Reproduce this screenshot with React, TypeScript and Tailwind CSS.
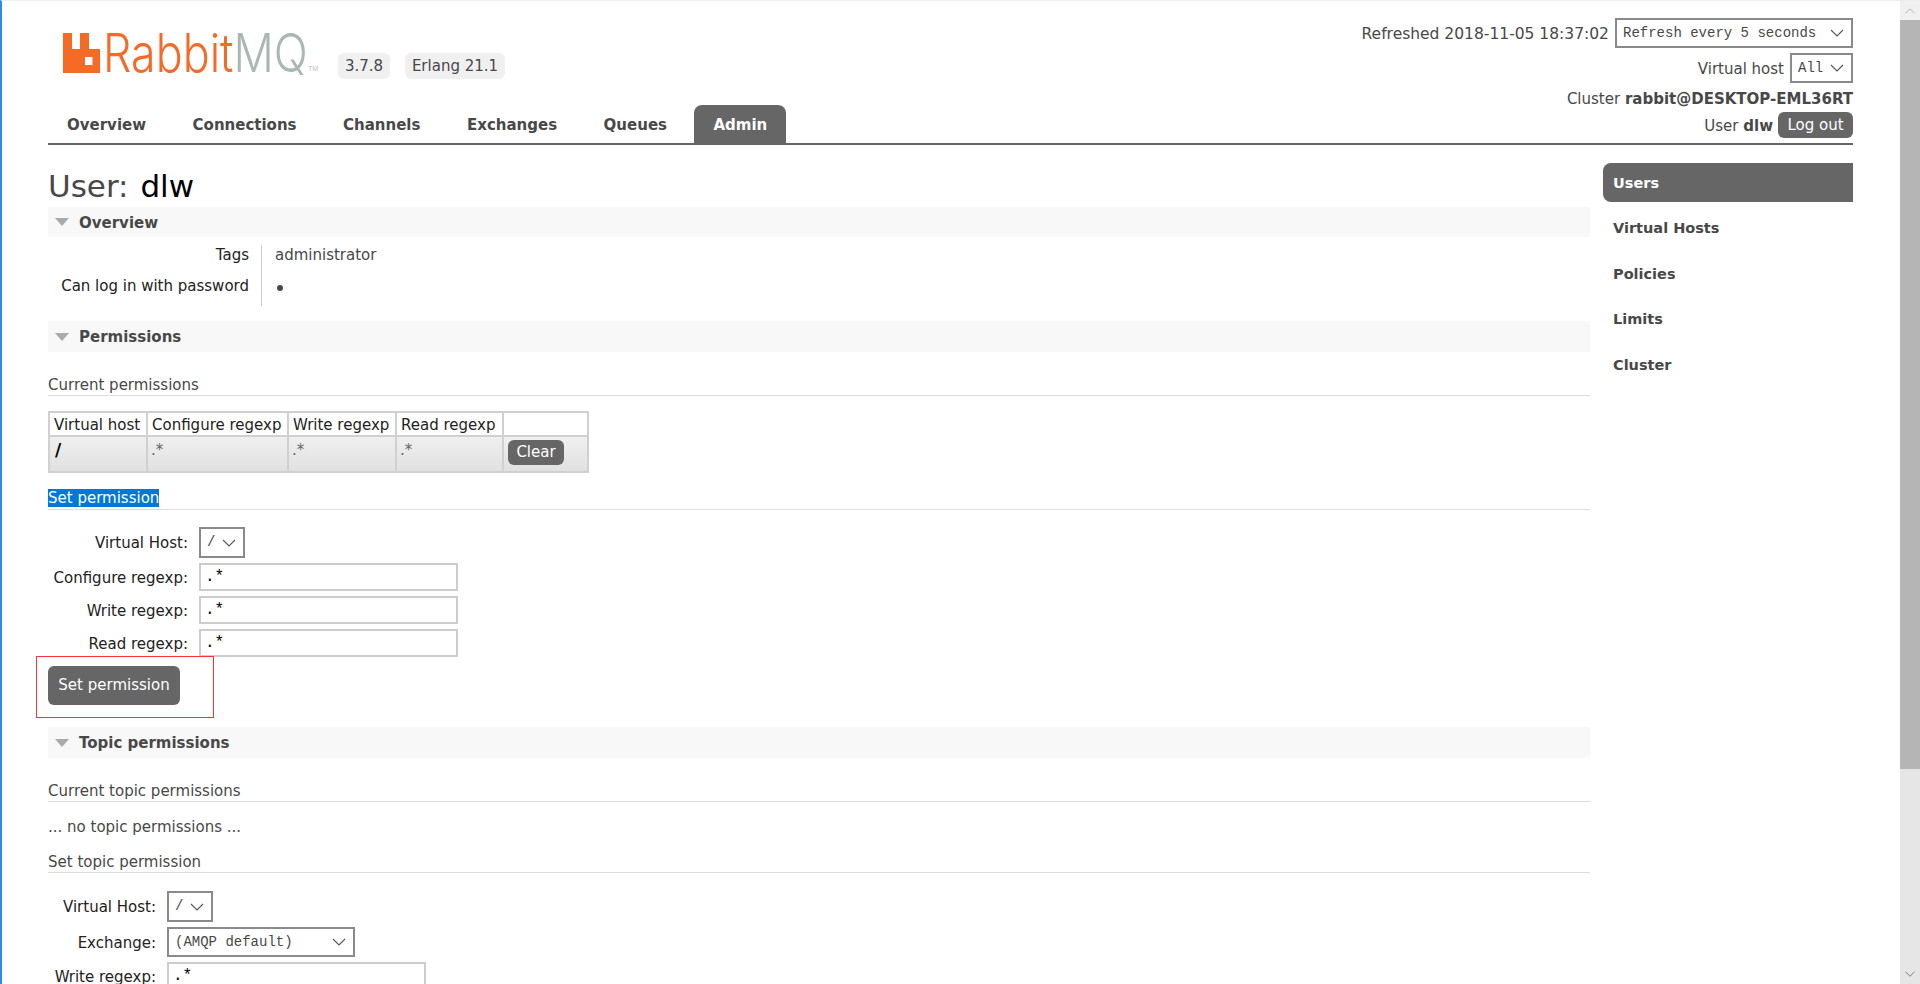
function Chevron({ className = "stroke-[#555]" }: { className?: string }) {
  return (
    <svg viewBox="0 0 14 8" className={`h-2 w-3.5 shrink-0 fill-none ${className}`}>
      <path d="M1 1l6 6 6-6" strokeWidth="1.1" />
    </svg>
  );
}

function FakeSelect({ value, className }: { value: string; className: string }) {
  return (
    <div
      className={`flex items-center justify-between border-2 border-[#8a8a8a] bg-white pl-[6px] pr-[7px] font-['Liberation_Mono',monospace] text-[14px] text-[#484848] ${className}`}
    >
      <span className="whitespace-nowrap">{value}</span>
      <Chevron />
    </div>
  );
}

function RegexpInput({ className }: { className: string }) {
  return (
    <input
      readOnly
      value=".*"
      className={`h-[28px] border-2 border-[#ccc] bg-white pl-[4px] font-['Liberation_Mono',monospace] text-[16px] text-black outline-none ${className}`}
    />
  );
}

function SectionHeader({ title, className = "" }: { title: string; className?: string }) {
  return (
    <div className={`flex h-[31px] items-center bg-[#f8f8f8] pl-[7px] ${className}`}>
      <div className="h-0 w-0 border-x-[7px] border-t-[8px] border-x-transparent border-t-[#aaa]" />
      <h2 className="ml-[10px] pt-[2px] text-[15px] font-bold text-[#484848]">{title}</h2>
    </div>
  );
}

function SubHeader({ children, className = "" }: { children: React.ReactNode; className?: string }) {
  return (
    <div className={`h-[20px] border-b border-[#ddd] text-[15px] leading-[18px] text-[#484848] ${className}`}>
      {children}
    </div>
  );
}

function FormRow({
  label,
  labelWidth,
  className = "",
  children,
}: {
  label: string;
  labelWidth: string;
  className?: string;
  children: React.ReactNode;
}) {
  return (
    <div className={`flex items-center gap-[11px] ${className}`}>
      <label className={`pt-[2px] text-right text-[15px] text-[#222] ${labelWidth}`}>{label}</label>
      {children}
    </div>
  );
}

function Logo() {
  return (
    <div className="ml-[15px] flex w-[275px] items-start">
      <svg viewBox="0 0 37 40" className="h-[40px] w-[37px] shrink-0">
        <path
          fillRule="evenodd"
          fill="#f56a25"
          d="M0 0H9V16H17V0H26V16H37V40H0ZM22 24V32H29.5V24Z"
        />
      </svg>
      <div className="relative ml-[3px] h-[40px] w-[235px]">
        <span className="absolute -top-[16px] left-0 origin-left scale-x-[0.845] whitespace-nowrap font-['Inter',sans-serif] text-[53px] font-light leading-[72px] text-[#f56a25]">
          Rabbit<span className="text-[#a9b8b2]">MQ</span>
        </span>
        <span className="absolute left-[205px] top-[31px] font-['Liberation_Sans',sans-serif] text-[7px] text-[#b5bfbb]">TM</span>
      </div>
    </div>
  );
}

const tabs = ["Overview", "Connections", "Channels", "Exchanges", "Queues"];
const sideItems = ["Virtual Hosts", "Policies", "Limits", "Cluster"];

export default function App() {
  return (
    <div className="flex h-[984px] w-full overflow-hidden border-l-2 border-t border-l-[#2f89e8] border-t-[#eee] bg-white font-['DejaVu_Sans',sans-serif] text-[#484848]">
      <div className="min-w-0 flex-1 pl-[46px] pr-[47px]">
        <header className="flex h-[144px] justify-between border-b-2 border-[#666]">
          <div className="flex flex-col pt-[32px]">
            <div className="flex items-start">
              <Logo />
              <div className="mt-[20px] flex gap-[15px] text-[15px]">
                <span className="flex h-[26px] w-[52px] items-center justify-center rounded-md bg-[#f0f0f0]">3.7.8</span>
                <span className="flex h-[26px] w-[100px] items-center justify-center rounded-md bg-[#f0f0f0]">Erlang 21.1</span>
              </div>
            </div>
            <nav className="mt-auto flex gap-[8.5px]">
              {tabs.map((tab) => (
                <a key={tab} className="flex h-[38px] items-center px-[19px] pt-[2px] text-[15px] font-bold text-[#484848]">
                  {tab}
                </a>
              ))}
              <a className="flex h-[38px] items-center rounded-t-lg bg-[#666] px-[19px] pt-[2px] text-[15px] font-bold text-white">
                Admin
              </a>
            </nav>
          </div>
          <div className="flex flex-col items-end pt-[17px] text-[15px]">
            <div className="flex h-[30px] items-center gap-[6px]">
              <span className="pt-[3px] text-[15.5px]">Refreshed 2018-11-05 18:37:02</span>
              <FakeSelect value="Refresh every 5 seconds" className="h-[30px] w-[238px]" />
            </div>
            <div className="mt-[5px] flex h-[30px] items-center gap-[6px]">
              <span className="pt-[2px]">Virtual host</span>
              <FakeSelect value="All" className="h-[30px] w-[63px]" />
            </div>
            <div className="mt-[6px] h-[19px] leading-[20px]">
              Cluster <b>rabbit@DESKTOP-EML36RT</b>
            </div>
            <div className="mt-[4px] flex items-center gap-[5px]">
              <span className="pt-[2px]">
                User <b>dlw</b>
              </span>
              <button className="h-[26px] w-[75px] rounded-md bg-[#666] text-[15px] text-white">Log out</button>
            </div>
          </div>
        </header>

        <div className="flex gap-[13px]">
          <main className="min-w-0 flex-1">
            <h1 className="flex h-[62px] items-end pb-[1px] text-[31px] leading-[40px] text-[#484848]">
              User:&nbsp;<span className="ml-[2px] text-black">dlw</span>
            </h1>

            <SectionHeader title="Overview" className="!h-[30px]" />
            <div className="mt-[8px] grid w-max grid-cols-[214px_auto] text-[15px] leading-[20px]">
              <div className="h-[30px] border-r border-[#ccc] pr-[12px] text-right text-[#222]">Tags</div>
              <div className="h-[30px] pl-[13px]">administrator</div>
              <div className="h-[31px] border-r border-[#ccc] pr-[12px] pt-[1px] text-right text-[#222]">Can log in with password</div>
              <div className="flex h-[31px] items-start pl-[15px] pt-[10px]">
                <span className="h-[6px] w-[6px] rounded-full bg-[#484848]" />
              </div>
            </div>

            <SectionHeader title="Permissions" className="mt-[15px]" />
            <SubHeader className="mt-[24px]">Current permissions</SubHeader>
            <table className="mt-[15px] w-[541px] table-fixed border-collapse border-2 border-[#d0d0d0] text-[15px] text-[#222]">
              <colgroup>
                <col className="w-[98px]" />
                <col className="w-[141px]" />
                <col className="w-[108px]" />
                <col className="w-[107px]" />
                <col />
              </colgroup>
              <thead>
                <tr className="h-[24px] border-b-2 border-[#d0d0d0]">
                  {["Virtual host", "Configure regexp", "Write regexp", "Read regexp", ""].map((heading, i) => (
                    <th key={i} className="whitespace-nowrap border-r-2 border-[#d0d0d0] pl-[4px] pt-[1px] text-left font-normal leading-[18px] last:border-r-0">
                      {heading}
                    </th>
                  ))}
                </tr>
              </thead>
              <tbody>
                <tr className="h-[36px] bg-gradient-to-b from-[#f0f0f0] to-[#e0e0e0]">
                  <td className="border-r-2 border-[#d0d0d0] pb-[9px] pl-[5px] align-middle text-[17px] font-bold leading-[24px] text-black">/</td>
                  {[0, 1, 2].map((i) => (
                    <td key={i} className="border-r-2 border-[#d0d0d0] pb-[9px] pl-[3px] align-middle leading-[24px] text-[#666]">
                      .*
                    </td>
                  ))}
                  <td className="pb-[4px] pl-[4px] align-middle">
                    <button className="h-[25px] w-[56px] rounded-md bg-[#666] text-[15px] text-white">Clear</button>
                  </td>
                </tr>
              </tbody>
            </table>

            <SubHeader className="mt-[16px] !h-[21px]">
              <span className="inline-block h-[18px] bg-[#0078d7] text-white">Set permission</span>
            </SubHeader>

            <div className="mt-[17px] flex flex-col gap-[5px]">
              <FormRow label="Virtual Host:" labelWidth="w-[140px]">
                <FakeSelect value="/" className="h-[31px] w-[46px]" />
              </FormRow>
              <FormRow label="Configure regexp:" labelWidth="w-[140px]">
                <RegexpInput className="w-[259px]" />
              </FormRow>
              <FormRow label="Write regexp:" labelWidth="w-[140px]">
                <RegexpInput className="w-[259px]" />
              </FormRow>
              <FormRow label="Read regexp:" labelWidth="w-[140px]">
                <RegexpInput className="w-[259px]" />
              </FormRow>
            </div>

            <div className="relative mt-[9px] w-max">
              <button className="h-[39px] w-[132px] rounded-md bg-[#666] text-[15px] text-white">Set permission</button>
              <div className="absolute -left-[12px] -top-[10px] h-[62px] w-[178px] border border-[#f33]" />
            </div>

            <SectionHeader title="Topic permissions" className="mt-[22px]" />
            <SubHeader className="mt-[24px]">Current topic permissions</SubHeader>
            <p className="mt-[15px] h-[20px] text-[15px] leading-[20px]">... no topic permissions ...</p>
            <SubHeader className="mt-[16px]">Set topic permission</SubHeader>

            <div className="mt-[18px] flex flex-col gap-[5px]">
              <FormRow label="Virtual Host:" labelWidth="w-[108px]">
                <FakeSelect value="/" className="h-[31px] w-[46px]" />
              </FormRow>
              <FormRow label="Exchange:" labelWidth="w-[108px]">
                <FakeSelect value="(AMQP default)" className="h-[30px] w-[188px]" />
              </FormRow>
              <FormRow label="Write regexp:" labelWidth="w-[108px]">
                <RegexpInput className="w-[259px]" />
              </FormRow>
            </div>
          </main>

          <aside className="mt-[18px] flex w-[250px] shrink-0 flex-col gap-[6.5px] text-[14.5px] font-bold">
            <a className="flex h-[39px] items-center rounded-l-lg bg-[#666] pl-[10px] pt-[2px] text-white">Users</a>
            {sideItems.map((item) => (
              <a key={item} className="flex h-[39px] items-center pl-[10px] pt-[2px] text-[#484848]">
                {item}
              </a>
            ))}
          </aside>
        </div>
      </div>

      <div className="flex h-full w-5 shrink-0 flex-col bg-[#e6e6e6]">
        <div className="flex h-[19px] items-center justify-center bg-[#f0f0f0]">
          <Chevron className="rotate-180 scale-75 stroke-[#aaa]" />
        </div>
        <div className="h-[749px] bg-[#b5b5b5]" />
        <div className="mt-auto flex h-[20px] items-center justify-center">
          <Chevron className="scale-75 stroke-[#666]" />
        </div>
      </div>
    </div>
  );
}
